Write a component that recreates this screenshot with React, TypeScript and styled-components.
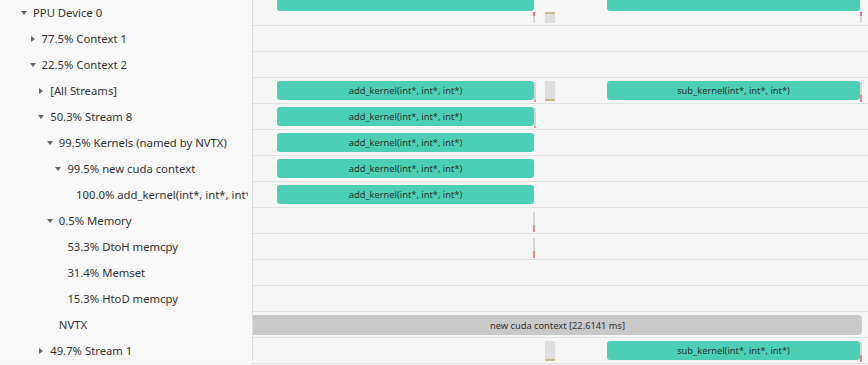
import React from "react";
import styled, { createGlobalStyle, css } from "styled-components";

const Global = createGlobalStyle`
  html, body { margin: 0; padding: 0; background: #f7f7f7; }
  body { font-family: "Noto Sans", "Open Sans", sans-serif; color: #333; }
  * { box-sizing: border-box; }
`;

type Item =
  | { kind: "kernel"; left: number; width: number; label?: string; clipTop?: boolean }
  | { kind: "range"; left: number; width: number; label: string }
  | { kind: "tick"; left: number; mark: "top" | "bottom" | "dot"; short?: boolean }
  | { kind: "slot"; left: number; edge: "top" | "bottom"; short?: boolean };

type Row = { label: string; level: number; state: "open" | "closed" | "leaf"; items: Item[] };

const ADD = "add_kernel(int*, int*, int*)";
const SUB = "sub_kernel(int*, int*, int*)";

const rows: Row[] = [
  {
    label: "PPU Device 0", level: 0, state: "open",
    items: [
      { kind: "kernel", left: 24, width: 257, clipTop: true },
      { kind: "kernel", left: 354, width: 253, clipTop: true },
      { kind: "tick", left: 280, mark: "top", short: true },
      { kind: "slot", left: 292, edge: "top", short: true },
      { kind: "tick", left: 607, mark: "top", short: true },
    ],
  },
  { label: "77.5% Context 1", level: 1, state: "closed", items: [] },
  { label: "22.5% Context 2", level: 1, state: "open", items: [] },
  {
    label: "[All Streams]", level: 2, state: "closed",
    items: [
      { kind: "kernel", left: 24, width: 257, label: ADD },
      { kind: "tick", left: 281, mark: "dot" },
      { kind: "slot", left: 292, edge: "bottom" },
      { kind: "kernel", left: 354, width: 253, label: SUB },
      { kind: "tick", left: 607, mark: "bottom" },
    ],
  },
  {
    label: "50.3% Stream 8", level: 2, state: "open",
    items: [{ kind: "kernel", left: 24, width: 257, label: ADD }, { kind: "tick", left: 281, mark: "dot" }],
  },
  {
    label: "99.5% Kernels (named by NVTX)", level: 3, state: "open",
    items: [{ kind: "kernel", left: 24, width: 257, label: ADD }],
  },
  {
    label: "99.5% new cuda context", level: 4, state: "open",
    items: [{ kind: "kernel", left: 24, width: 257, label: ADD }],
  },
  {
    label: "100.0% add_kernel(int*, int*, int*)", level: 5, state: "leaf",
    items: [{ kind: "kernel", left: 24, width: 257, label: ADD }],
  },
  {
    label: "0.5% Memory", level: 3, state: "open",
    items: [{ kind: "tick", left: 280, mark: "bottom" }],
  },
  {
    label: "53.3% DtoH memcpy", level: 4, state: "leaf",
    items: [{ kind: "tick", left: 280, mark: "bottom" }],
  },
  { label: "31.4% Memset", level: 4, state: "leaf", items: [] },
  { label: "15.3% HtoD memcpy", level: 4, state: "leaf", items: [] },
  {
    label: "NVTX", level: 3, state: "leaf",
    items: [{ kind: "range", left: 0, width: 609, label: "new cuda context [22.6141 ms]" }],
  },
  {
    label: "49.7% Stream 1", level: 2, state: "closed",
    items: [
      { kind: "slot", left: 292, edge: "bottom" },
      { kind: "kernel", left: 354, width: 253, label: SUB },
      { kind: "tick", left: 607, mark: "bottom" },
    ],
  },
];

const Page = styled.div`
  display: flex;
  flex-direction: column;
  width: 868px;
  height: 365px;
  overflow: hidden;
`;

const RowLine = styled.div`
  display: flex;
  height: 26px;
`;

const Label = styled.div<{ $level: number }>`
  width: 253px;
  flex: none;
  display: flex;
  align-items: center;
  padding-left: ${(p) => 21 + p.$level * 8.6}px;
  padding-right: 4px;
  border-right: 1px solid #dcdcdc;
  background: #f8f8f8;
  font-size: 11.3px;
  color: #333;
  white-space: nowrap;
  overflow: hidden;
`;

const Toggle = styled.span<{ $state: "open" | "closed" | "leaf" }>`
  flex: none;
  width: 12px;
  height: 10px;
  display: flex;
  align-items: center;
  justify-content: flex-start;
  &::before {
    content: "";
    display: ${(p) => (p.$state === "leaf" ? "none" : "block")};
    width: 0;
    height: 0;
    ${(p) =>
      p.$state === "open"
        ? css`
            border-left: 3px solid transparent;
            border-right: 3px solid transparent;
            border-top: 4px solid #666;
          `
        : css`
            margin-left: 1px;
            border-top: 3px solid transparent;
            border-bottom: 3px solid transparent;
            border-left: 4px solid #666;
          `}
  }
`;

const LabelText = styled.span`
  line-height: 26px;
  min-width: 0;
  overflow: hidden;
`;

const Track = styled.div`
  position: relative;
  flex: 1;
  border-bottom: 1px solid #e1e1e1;
  background: #f6f6f6;
`;

const Kernel = styled.div<{ $clip?: boolean }>`
  position: absolute;
  top: ${(p) => (p.$clip ? "0" : "3px")};
  height: ${(p) => (p.$clip ? "11px" : "19px")};
  background: #4ccfb5;
  border-radius: ${(p) => (p.$clip ? "0 0 3px 3px" : "3px")};
  display: flex;
  align-items: center;
  justify-content: center;
  font-size: 9.3px;
  color: #27332f;
  white-space: nowrap;
  overflow: hidden;
`;

const Range = styled.div`
  position: absolute;
  top: 3px;
  height: 20px;
  background: #c9c9c9;
  border-radius: 0 4px 4px 0;
  display: flex;
  align-items: center;
  justify-content: center;
  font-size: 9.3px;
  color: #333;
  white-space: nowrap;
`;

const Tick = styled.div<{ $mark: "top" | "bottom" | "dot"; $short?: boolean }>`
  position: absolute;
  top: ${(p) => (p.$short ? "12px" : "4px")};
  height: ${(p) => (p.$short ? "11px" : "20px")};
  width: 2px;
  background: #d6d6d6;
  ${(p) =>
    p.$mark === "top"
      ? css`
          border-top: 4px solid #ee6e6e;
        `
      : p.$mark === "bottom"
      ? css`
          border-bottom: 7px solid #f08585;
        `
      : css`
          border-bottom: 2px solid #f09a9a;
        `}
`;

const Slot = styled.div<{ $edge: "top" | "bottom"; $short?: boolean }>`
  position: absolute;
  top: ${(p) => (p.$short ? "12px" : "3px")};
  height: ${(p) => (p.$short ? "11px" : "20px")};
  width: 10px;
  background: #dedede;
  ${(p) =>
    p.$edge === "top"
      ? css`
          border-top: 2px solid #c9b98a;
        `
      : css`
          border-bottom: 2px solid #c9b98a;
        `}
`;

function renderItem(it: Item, i: number) {
  switch (it.kind) {
    case "kernel":
      return (
        <Kernel key={i} $clip={it.clipTop} style={{ left: it.left, width: it.width }}>
          {it.label}
        </Kernel>
      );
    case "range":
      return (
        <Range key={i} style={{ left: it.left, width: it.width }}>
          {it.label}
        </Range>
      );
    case "tick":
      return <Tick key={i} $mark={it.mark} $short={it.short} style={{ left: it.left }} />;
    case "slot":
      return <Slot key={i} $edge={it.edge} $short={it.short} style={{ left: it.left }} />;
  }
}

export default function App() {
  return (
    <>
      <Global />
      <Page>
        {rows.map((r, i) => (
          <RowLine key={i}>
            <Label $level={r.level}>
              <Toggle $state={r.state} />
              <LabelText>{r.label}</LabelText>
            </Label>
            <Track>{r.items.map(renderItem)}</Track>
          </RowLine>
        ))}
      </Page>
    </>
  );
}
